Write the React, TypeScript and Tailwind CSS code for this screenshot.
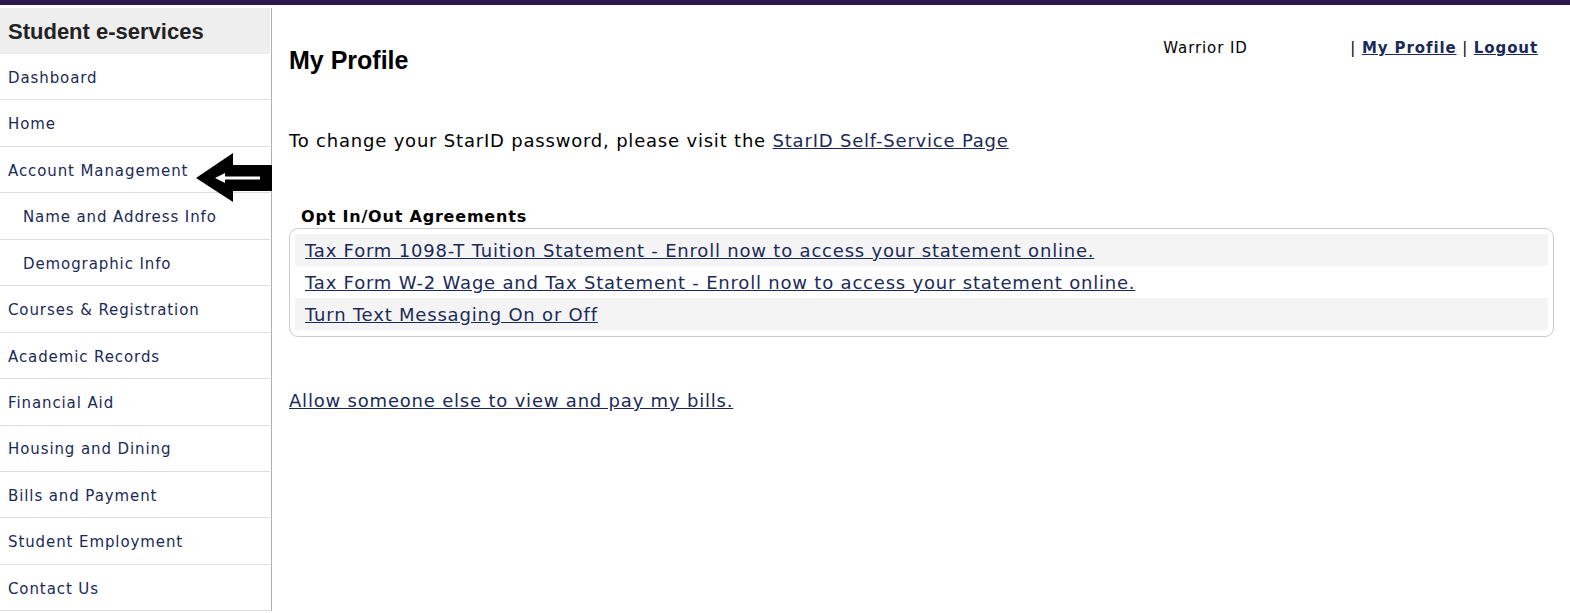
import React from "react";

const nav = [
  { label: "Dashboard", sub: false },
  { label: "Home", sub: false },
  { label: "Account Management", sub: false },
  { label: "Name and Address Info", sub: true },
  { label: "Demographic Info", sub: true },
  { label: "Courses & Registration", sub: false },
  { label: "Academic Records", sub: false },
  { label: "Financial Aid", sub: false },
  { label: "Housing and Dining", sub: false },
  { label: "Bills and Payment", sub: false },
  { label: "Student Employment", sub: false },
  { label: "Contact Us", sub: false },
];

const agreements = [
  "Tax Form 1098-T Tuition Statement - Enroll now to access your statement online.",
  "Tax Form W-2 Wage and Tax Statement - Enroll now to access your statement online.",
  "Turn Text Messaging On or Off",
];

function Arrow() {
  return (
    <svg
      className="absolute left-[196px] top-[145px]"
      width="76"
      height="49"
      viewBox="0 0 76 49"
    >
      <polygon points="0,25 37,0 37,12 76,12 76,38 37,38 37,49" fill="#000" />
      <polygon points="19,25 29,20 29,23.5 64,23.5 64,26.5 29,26.5 29,30" fill="#fff" />
    </svg>
  );
}

export default function App() {
  return (
    <div className="min-h-[613px] bg-white font-['DejaVu_Sans',Verdana,sans-serif] text-black">
      <div className="h-[5px] bg-[#2e1a4f]" />
      <div className="flex pt-[3px]">
        <aside className="relative w-[272px] shrink-0 border-r border-[#b0b0b0]">
          <div className="flex h-[46px] w-[270px] items-center bg-[#eeeeee] pl-[8px] font-['Liberation_Sans',Arial,sans-serif] text-[22px] font-bold text-[#222]">
            Student e-services
          </div>
          <ul className="w-[270px]">
            {nav.map((n) => (
              <li
                key={n.label}
                className={`flex h-[46.45px] items-center border-b border-[#dddddd] pt-[3px] text-[15px] tracking-[0.06em] text-[#1b2a57] ${
                  n.sub ? "pl-[23px]" : "pl-[8px]"
                }`}
              >
                {n.label}
              </li>
            ))}
          </ul>
          <Arrow />
        </aside>

        <main className="flex-1 pl-[17px] pr-[16px] tracking-[0.05em]">
          <div className="flex items-start justify-between">
            <h1 className="mt-[38px] font-['Liberation_Sans',Arial,sans-serif] text-[25px] leading-[28px] font-bold tracking-normal">
              My Profile
            </h1>
            <div className="mt-[30px] mr-[16px] flex text-[15px] leading-[20px] tracking-[0.06em]">
              <span className="w-[188px]">Warrior ID</span>
              <span className="-ml-[1px]">
                |{" "}
                <a className="font-bold text-[#1b2a57] underline">My Profile</a> |{" "}
                <a className="font-bold text-[#1b2a57] underline">Logout</a>
              </span>
            </div>
          </div>

          <p className="mt-[56px] text-[18px] leading-[22px]">
            To change your StarID password, please visit the{" "}
            <a className="text-[#1b2a57] underline">StarID Self-Service Page</a>
          </p>

          <h2 className="mt-[55px] pl-[12px] text-[16px] leading-[20px] font-bold">
            Opt In/Out Agreements
          </h2>
          <div className="mt-[1px] rounded-[9px] border border-[#cccccc] px-[5px] pt-[5px] pb-[6px]">
            {agreements.map((a, i) => (
              <div
                key={a}
                className={`flex h-[32px] items-center pl-[10px] text-[18px] ${
                  i % 2 === 0 ? "bg-[#f4f4f4]" : "bg-white"
                }`}
              >
                <a className="text-[#1b2a57] underline">{a}</a>
              </div>
            ))}
          </div>

          <p className="mt-[53px] text-[18px] leading-[22px]">
            <a className="text-[#1b2a57] underline">Allow someone else to view and pay my bills.</a>
          </p>
        </main>
      </div>
    </div>
  );
}
